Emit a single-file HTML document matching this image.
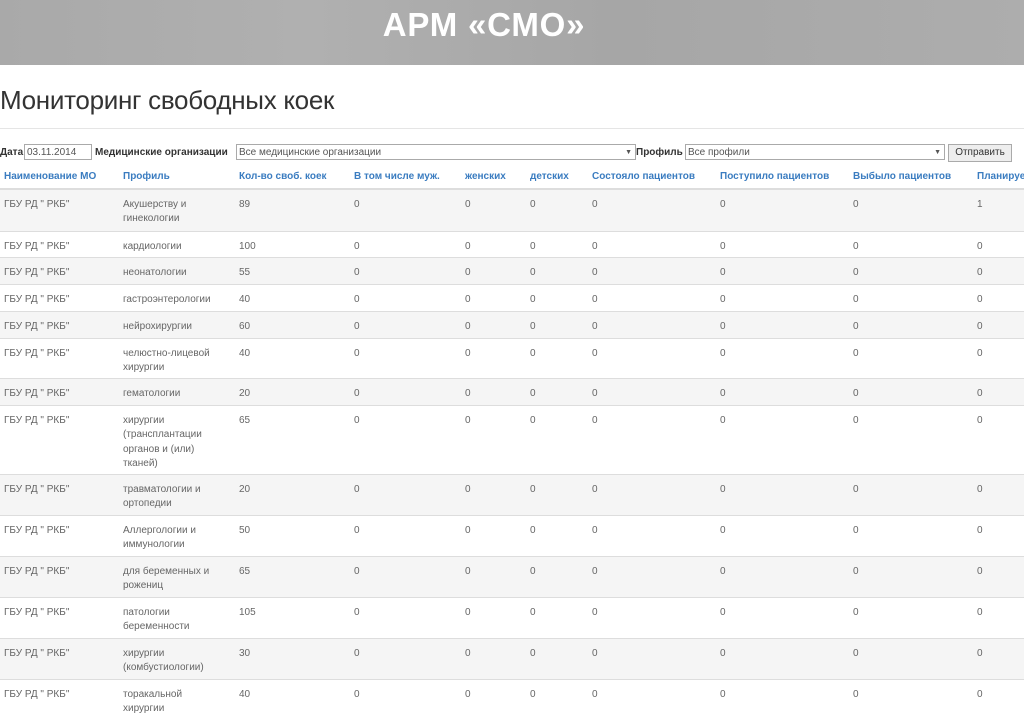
<!DOCTYPE html>
<html><head><meta charset="utf-8"><style>
body{margin:0;width:1024px;height:715px;overflow:hidden;background:#fff;font-family:"Liberation Sans",Arial,sans-serif;position:relative}
.band{position:absolute;left:0;top:0;width:1024px;height:65px;background:linear-gradient(90deg,#a9a9a9,#b0b0b0 30%,#a6a6a6 60%,#adadad);}
.band h1{position:absolute;left:0;width:968px;text-align:center;top:6px;margin:0;font-size:33px;color:#fff;font-weight:bold;letter-spacing:0.8px}
.h2{position:absolute;left:0;top:85px;font-size:26px;color:#333;letter-spacing:-0.3px}
.hr{position:absolute;left:0;top:128px;width:1024px;height:1px;background:#e5e5e5}
.f{position:absolute;font-size:10px;color:#333;top:147px}
.inp{position:absolute;border:1px solid #aaa;height:16px;top:144px;background:#fff;font-size:10px;color:#555;line-height:16px;padding-left:2px;box-sizing:border-box}
.btn{position:absolute;left:948px;top:144px;width:64px;height:18px;border:1px solid #aaa;background:#eee;font-size:10px;color:#333;text-align:center;line-height:16px;box-sizing:border-box}
.th{position:absolute;top:171px;font-size:10px;color:#3a7cc0;font-weight:bold;white-space:nowrap}
.row{position:absolute;left:0;width:1024px;border-top:1px solid #ddd;box-sizing:border-box}
.g{background:#f5f5f5}
.c{position:absolute;top:8px;font-size:10px;line-height:14.3px;color:#666}
</style></head><body>
<div class="band"><h1>АРМ «СМО»</h1></div>
<div class="h2">Мониторинг свободных коек</div>
<div class="hr"></div>
<div class="f" style="left:0"><b>Дата</b></div>
<div class="inp" style="left:24px;width:68px">03.11.2014</div>
<div class="f" style="left:95px"><b>Медицинские организации</b></div>
<div class="inp" style="left:236px;width:400px">Все медицинские организации<span style="position:absolute;right:3px;font-size:7px">▼</span></div>
<div class="f" style="left:636px"><b>Профиль</b></div>
<div class="inp" style="left:685px;width:260px">Все профили<span style="position:absolute;right:3px;font-size:7px">▼</span></div>
<div class="btn">Отправить</div>
<div class="th" style="left:4px">Наименование МО</div>
<div class="th" style="left:123px">Профиль</div>
<div class="th" style="left:239px">Кол-во своб. коек</div>
<div class="th" style="left:354px">В том числе муж.</div>
<div class="th" style="left:465px">женских</div>
<div class="th" style="left:530px">детских</div>
<div class="th" style="left:592px">Состояло пациентов</div>
<div class="th" style="left:720px">Поступило пациентов</div>
<div class="th" style="left:853px">Выбыло пациентов</div>
<div class="th" style="left:977px">Планируе</div>
<div style="position:absolute;left:0;top:188px;width:1024px;height:2px;background:#ddd"></div>
<div id="t"></div>
<script>
var rows=[[190,41,"Акушерству и<br>гинекологии","89","1"],[231,26,"кардиологии","100","0"],[257,27,"неонатологии","55","0"],[284,27,"гастроэнтерологии","40","0"],[311,27,"нейрохирургии","60","0"],[338,40,"челюстно-лицевой<br>хирургии","40","0"],[378,27,"гематологии","20","0"],[405,69,"хирургии<br>(трансплантации<br>органов и (или)<br>тканей)","65","0"],[474,41,"травматологии и<br>ортопедии","20","0"],[515,41,"Аллергологии и<br>иммунологии","50","0"],[556,41,"для беременных и<br>рожениц","65","0"],[597,41,"патологии<br>беременности","105","0"],[638,41,"хирургии<br>(комбустиологии)","30","0"],[679,41,"торакальной<br>хирургии","40","0"]];
var h="";rows.forEach(function(r,i){h+='<div class="row'+(i%2==0?' g':'')+'" style="top:'+r[0]+'px;height:'+r[1]+'px'+(i==0?';border-top:none':'')+'">'+
'<div class="c" style="left:4px">ГБУ РД " РКБ"</div><div class="c" style="left:123px">'+r[2]+'</div><div class="c" style="left:239px">'+r[3]+'</div>'+
[354,465,530,592,720,853].map(function(x){return '<div class="c" style="left:'+x+'px">0</div>'}).join('')+
'<div class="c" style="left:977px">'+r[4]+'</div></div>'});
document.getElementById("t").innerHTML=h;
</script>
</body></html>
